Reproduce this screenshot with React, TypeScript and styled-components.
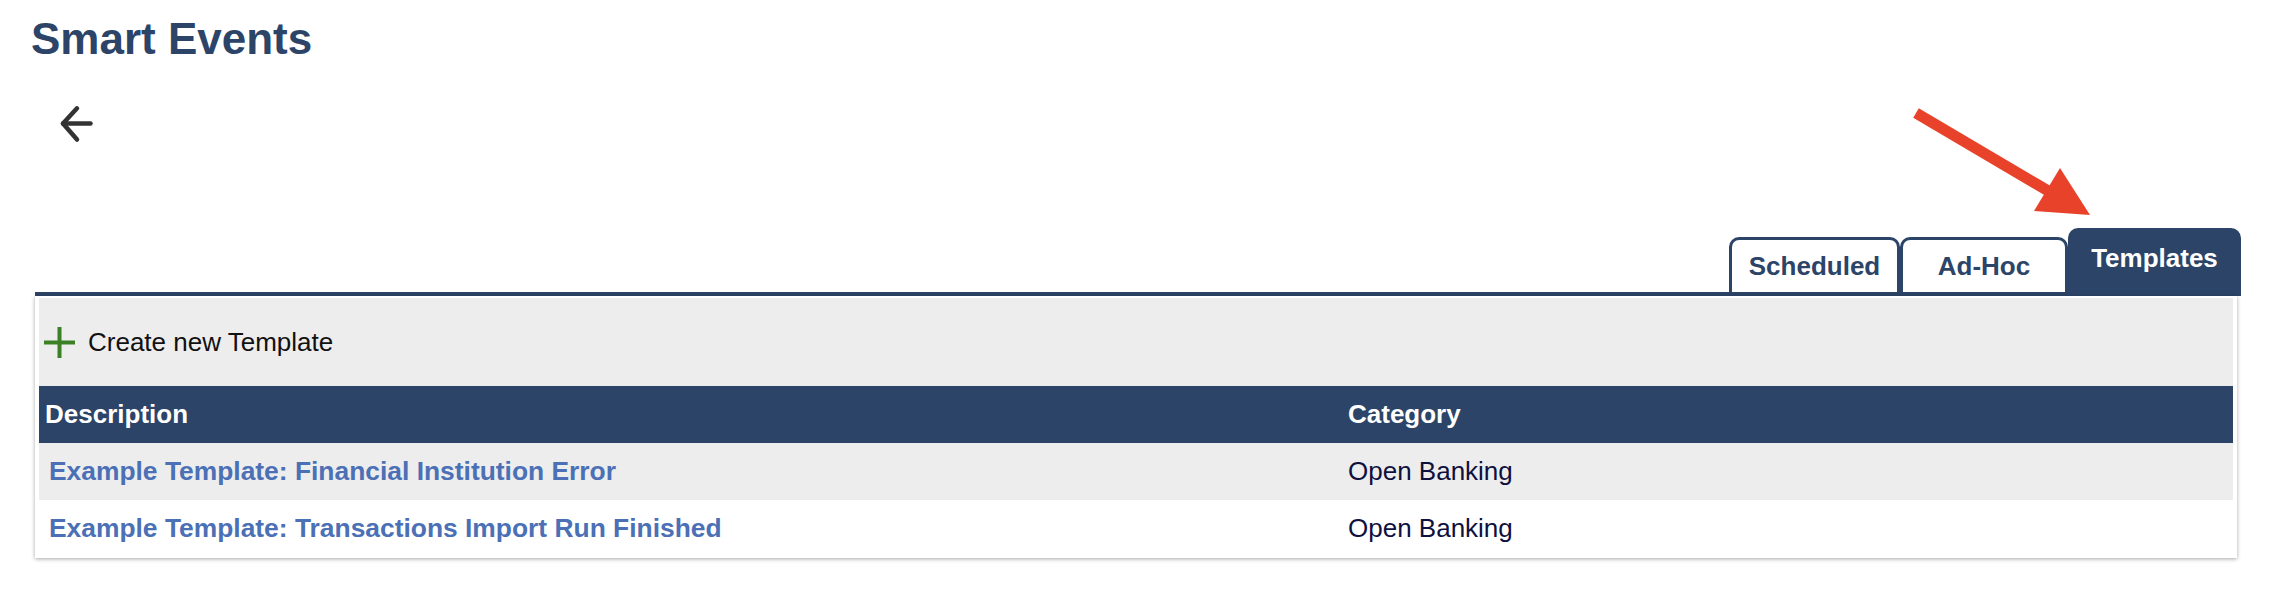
import { Fragment } from "react";
import styled, { createGlobalStyle } from "styled-components";

const GlobalStyle = createGlobalStyle`
    html, body {
        margin: 0;
        padding: 0;
        background: #ffffff;
        font-family: "Liberation Sans", Arial, sans-serif;
    }
`;

const navy = "#2c4467";

const Page = styled.div`
    position: relative;
    width: 2274px;
    min-height: 598px;
    padding-top: 13px;
    box-sizing: border-box;
`;

const Title = styled.h1`
    margin: 0 0 0 31px;
    font-size: 44px;
    line-height: 52px;
    font-weight: bold;
    color: ${navy};
`;

const BackButton = styled.button`
    display: block;
    margin: 37px 0 0 56px;
    padding: 0;
    width: 40px;
    height: 44px;
    border: none;
    background: none;
    color: #333333;
    cursor: pointer;
`;

const TabBar = styled.div`
    display: flex;
    justify-content: flex-end;
    align-items: flex-end;
    margin: 82px 33px 0 35px;
    height: 64px;
    border-bottom: 4px solid ${navy};
`;

const Tab = styled.div<{ $w: number; $active?: boolean }>`
    display: flex;
    align-items: center;
    justify-content: center;
    box-sizing: border-box;
    width: ${(p) => p.$w}px;
    height: ${(p) => (p.$active ? 64 : 55)}px;
    padding-bottom: ${(p) => (p.$active ? 6 : 0)}px;
    border: 3px solid ${navy};
    border-bottom: none;
    border-radius: 10px 10px 0 0;
    background: ${(p) => (p.$active ? navy : "#ffffff")};
    color: ${(p) => (p.$active ? "#ffffff" : navy)};
    font-size: 26px;
    font-weight: bold;
    cursor: pointer;
`;

const Panel = styled.div`
    margin: 0 37px 0 35px;
    padding: 2px 4px 1px;
    background: #ffffff;
    box-shadow: 0 1px 4px rgba(0, 0, 0, 0.35);
`;

const Toolbar = styled.div`
    display: flex;
    align-items: center;
    gap: 13px;
    height: 88px;
    padding-left: 5px;
    background: #ededed;
    font-size: 26px;
    color: #111111;
`;

const Grid = styled.div`
    display: grid;
    grid-template-columns: 1303px 1fr;
`;

const HeadCell = styled.div`
    display: flex;
    align-items: center;
    height: 57px;
    padding-left: 6px;
    background: ${navy};
    color: #ffffff;
    font-size: 26px;
    font-weight: bold;
`;

const Cell = styled.div<{ $alt?: boolean }>`
    display: flex;
    align-items: center;
    height: 57px;
    padding-left: 6px;
    background: ${(p) => (p.$alt ? "#ededed" : "#ffffff")};
    color: #10103f;
    font-size: 26px;
`;

const RowLink = styled.a`
    margin-left: 4px;
    color: #4b70b6;
    font-size: 26.4px;
    font-weight: bold;
    text-decoration: none;
    cursor: pointer;
`;

const Pointer = styled.svg`
    position: absolute;
    left: 1900px;
    top: 100px;
`;

const templates = [
    { name: "Example Template: Financial Institution Error", category: "Open Banking" },
    { name: "Example Template: Transactions Import Run Finished", category: "Open Banking" },
];

export default function App() {
    return (
        <Page>
            <GlobalStyle/>
            <Title>Smart Events</Title>
            <BackButton aria-label="Back">
                <svg width="40" height="44" viewBox="0 0 40 44" fill="none" stroke="currentColor" strokeWidth="4.5" strokeLinecap="round" strokeLinejoin="round">
                    <path d="M21 6.3 7 21.5 21 37.5"/>
                    <path d="M34.5 21.5H7"/>
                </svg>
            </BackButton>

            <TabBar>
                <Tab $w={171}>Scheduled</Tab>
                <Tab $w={168}>Ad-Hoc</Tab>
                <Tab $w={173} $active>Templates</Tab>
            </TabBar>

            <Panel>
                <Toolbar>
                    <svg width="31" height="31" viewBox="0 0 31 31">
                        <line x1="15.5" y1="0" x2="15.5" y2="31" stroke="#3b8024" strokeWidth="4"/>
                        <line x1="0" y1="15.5" x2="31" y2="15.5" stroke="#3b8024" strokeWidth="4"/>
                    </svg>
                    Create new Template
                </Toolbar>
                <Grid>
                    <HeadCell>Description</HeadCell>
                    <HeadCell>Category</HeadCell>
                    {templates.map((t, i) => (
                        <Fragment key={t.name}>
                            <Cell $alt={i % 2 === 0}><RowLink>{t.name}</RowLink></Cell>
                            <Cell $alt={i % 2 === 0}>{t.category}</Cell>
                        </Fragment>
                    ))}
                </Grid>
            </Panel>

            <Pointer width="200" height="125" viewBox="0 0 200 125">
                <line x1="16" y1="13" x2="150" y2="92" stroke="#e8432a" strokeWidth="11"/>
                <polygon points="190,115 134,111 160,68" fill="#e8432a"/>
            </Pointer>
        </Page>
    );
}
